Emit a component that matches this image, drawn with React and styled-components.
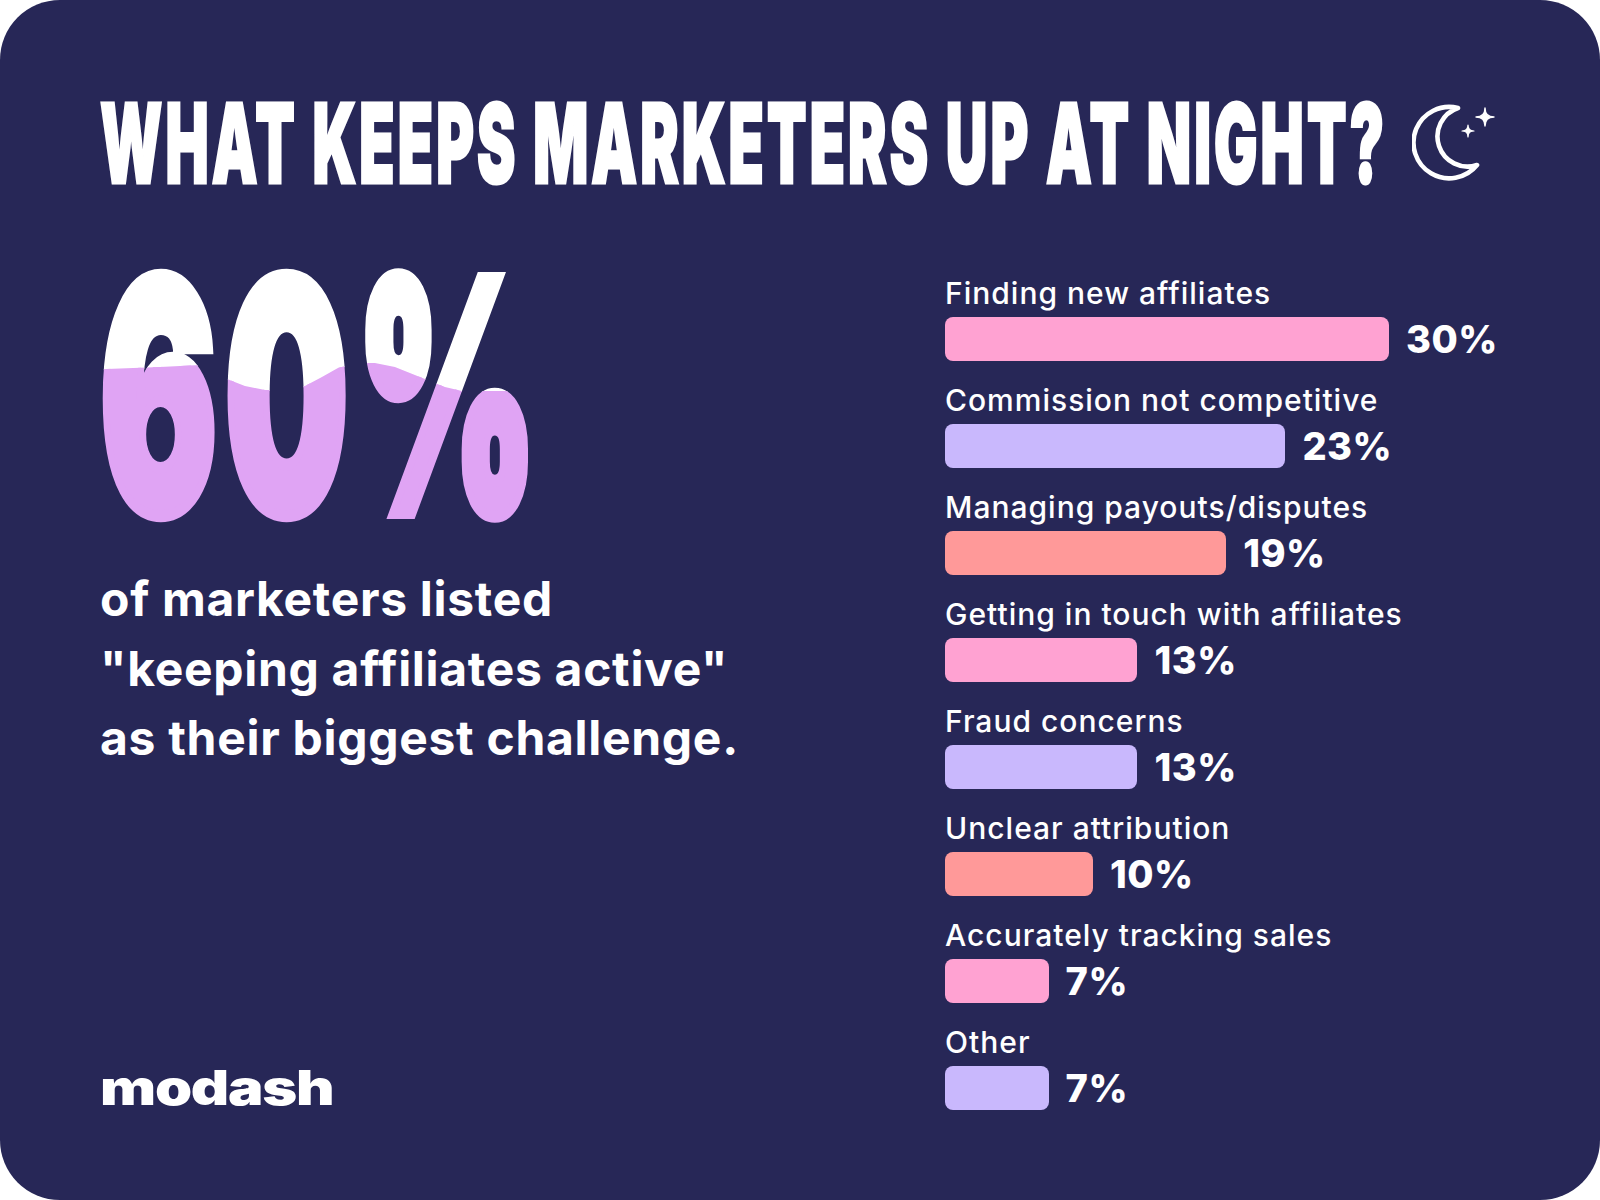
import { useLayoutEffect, useRef, useState } from "react"
import styled, { createGlobalStyle } from "styled-components"

const GlobalStyle = createGlobalStyle`
  html, body {
    margin: 0;
    padding: 0;
    background: #ffffff;
  }
  body {
    font-family: Inter, "Noto Sans", sans-serif;
    -webkit-font-smoothing: antialiased;
  }
`

const NAVY = "#272757"
const FILL = "#e0a4f4"
const COLORS = {
  pink: "#ffa2d2",
  lilac: "#c9b8fd",
  salmon: "#ff9999"
}

const challenges = [
  { label: "Finding new affiliates", pct: 30, color: "pink" },
  { label: "Commission not competitive", pct: 23, color: "lilac" },
  { label: "Managing payouts/disputes", pct: 19, color: "salmon" },
  { label: "Getting in touch with affiliates", pct: 13, color: "pink" },
  { label: "Fraud concerns", pct: 13, color: "lilac" },
  { label: "Unclear attribution", pct: 10, color: "salmon" },
  { label: "Accurately tracking sales", pct: 7, color: "pink" },
  { label: "Other", pct: 7, color: "lilac" }
]

// wave line of the lilac fill inside "60%", in px of a 445 x 246 box
const STAT_W = 445
const STAT_H = 246
const wave = [
  [-20, 97], [60, 94], [120, 91], [127, 106], [145, 113], [165, 117],
  [185, 117], [205, 113], [222, 104], [238, 95], [256, 90], [275, 90],
  [295, 94], [320, 104], [345, 114], [362, 118], [470, 118]
]
const toPolygon = points => points
  .map(([x, y]) => `${(x / STAT_W * 100).toFixed(2)}% ${(y / STAT_H * 100).toFixed(2)}%`)
  .join(", ")
const lowerPart = toPolygon([...wave, [470, 320], [-20, 320]])
const upperPart = toPolygon([[-20, -80], [470, -80], ...wave.slice().reverse().map(([x, y]) => [x, y + 1])])

// squeeze a heavy font into the condensed look of the poster
function useSqueeze(target) {
  const ref = useRef(null)
  const [scale, setScale] = useState(1)

  useLayoutEffect(() => {
    const measure = () => {
      if (!ref.current) return
      const natural = ref.current.scrollWidth
      if (natural) setScale(target / natural)
    }
    measure()
    if (document.fonts) document.fonts.ready.then(measure)
  }, [target])

  return [ref, scale]
}

const Card = styled.div`
  box-sizing: border-box;
  width: 1600px;
  height: 1200px;
  padding: 102px 100px 88px 100px;
  background: ${NAVY};
  border-radius: 60px;
  color: #ffffff;
  display: flex;
  flex-direction: column;
  overflow: hidden;
`

const Header = styled.div`
  display: flex;
  align-items: flex-start;
  height: 82px;
`

const TitleBox = styled.h1`
  margin: 0;
  width: 1287px;
  font-family: Inter, sans-serif;
  font-weight: 900;
  font-size: 110px;
  line-height: 83px;
  white-space: nowrap;
  text-transform: uppercase;
  -webkit-text-stroke: 3px #ffffff;
`

const Squeezed = styled.span`
  display: inline-block;
  position: relative;
  transform-origin: left top;
  letter-spacing: ${props => props.$spacing || "0"};
`

const MoonWrap = styled.div`
  margin: 1px 0 0 25px;
  display: flex;
`

const Body = styled.div`
  flex: 1;
  display: flex;
  justify-content: space-between;
  margin-top: 89px;
`

const LeftColumn = styled.div`
  display: flex;
  flex-direction: column;
`

const BigStat = styled.div`
  width: ${STAT_W}px;
  height: ${STAT_H}px;
  font-family: Inter, sans-serif;
  font-weight: 900;
  font-size: 323px;
  line-height: ${STAT_H}px;
  white-space: nowrap;
  color: transparent;
  -webkit-text-stroke: 12px transparent;

  ${Squeezed}::before,
  ${Squeezed}::after {
    content: "60%";
    position: absolute;
    inset: 0;
  }

  ${Squeezed}::before {
    color: #ffffff;
    -webkit-text-stroke: 12px #ffffff;
    clip-path: polygon(${upperPart});
  }

  ${Squeezed}::after {
    color: ${FILL};
    -webkit-text-stroke: 12px ${FILL};
    clip-path: polygon(${lowerPart});
  }
`

const Caption = styled.p`
  margin: 45px 0 0 0;
  font-family: Inter, sans-serif;
  font-weight: 700;
  font-size: 48px;
  line-height: 69.5px;
  letter-spacing: 0.7px;
`

const Logo = styled.div`
  margin-top: auto;
  width: 233px;
  font-family: Inter, sans-serif;
  font-weight: 900;
  font-size: 48px;
  line-height: 1;
  white-space: nowrap;
`

const ChartColumn = styled.div`
  width: 555px;
  padding-top: 3px;
  display: flex;
  flex-direction: column;
  gap: 22px;
`

const Row = styled.div`
  display: flex;
  flex-direction: column;
  gap: 7px;
`

const Label = styled.div`
  font-family: Inter, sans-serif;
  font-weight: 500;
  font-size: 30px;
  line-height: 34px;
  letter-spacing: 1px;
  white-space: nowrap;
`

const BarLine = styled.div`
  display: flex;
  align-items: center;
  gap: 17px;
  height: 44px;
`

const Bar = styled.div`
  width: ${props => props.$pct * 14.8}px;
  height: 44px;
  border-radius: 8px;
  background: ${props => COLORS[props.$color]};
`

const Percent = styled.div`
  font-family: Inter, sans-serif;
  font-weight: 800;
  font-size: 38px;
  line-height: 1;
  letter-spacing: 0.5px;
`

function sparkle(cx, cy, r) {
  return `M${cx} ${cy - r} Q${cx} ${cy} ${cx + r} ${cy} Q${cx} ${cy} ${cx} ${cy + r} Q${cx} ${cy} ${cx - r} ${cy} Q${cx} ${cy} ${cx} ${cy - r} Z`
}

function MoonIcon() {
  return (
    <svg width="90" height="82" viewBox="0 0 90 82" fill="none">
      <path
        d="M46 5 A35.7 35.7 0 1 0 65 62 A30 30 0 0 1 46 5 Z"
        stroke="#ffffff"
        strokeWidth="4.6"
        strokeLinejoin="round"
      />
      <path d={sparkle(73, 14, 9)} fill="#ffffff" stroke="#ffffff" strokeWidth="1.4" strokeLinejoin="round" />
      <path d={sparkle(56, 28, 6)} fill="#ffffff" stroke="#ffffff" strokeWidth="1.2" strokeLinejoin="round" />
    </svg>
  )
}

function Title() {
  const [ref, scale] = useSqueeze(1287)
  return (
    <TitleBox>
      <Squeezed ref={ref} $spacing="6px" style={{ transform: `scaleX(${scale})` }}>
        What keeps marketers up at night?
      </Squeezed>
    </TitleBox>
  )
}

function Stat() {
  const [ref, scale] = useSqueeze(STAT_W)
  return (
    <BigStat>
      <Squeezed ref={ref} $spacing="14px" style={{ transform: `scaleX(${scale})` }}>60%</Squeezed>
    </BigStat>
  )
}

function ModashLogo() {
  const [ref, scale] = useSqueeze(233)
  return (
    <Logo>
      <Squeezed ref={ref} $spacing="-1px" style={{ transform: `scaleX(${scale})` }}>modash</Squeezed>
    </Logo>
  )
}

export default function App() {
  return (
    <>
      <GlobalStyle />
      <Card>
        <Header>
          <Title />
          <MoonWrap>
            <MoonIcon />
          </MoonWrap>
        </Header>
        <Body>
          <LeftColumn>
            <Stat />
            <Caption>
              of marketers listed<br />
              "keeping affiliates active"<br />
              as their biggest challenge.
            </Caption>
            <ModashLogo />
          </LeftColumn>
          <ChartColumn>
            {challenges.map(item => (
              <Row key={item.label}>
                <Label>{item.label}</Label>
                <BarLine>
                  <Bar $pct={item.pct} $color={item.color} />
                  <Percent>{item.pct}%</Percent>
                </BarLine>
              </Row>
            ))}
          </ChartColumn>
        </Body>
      </Card>
    </>
  )
}
